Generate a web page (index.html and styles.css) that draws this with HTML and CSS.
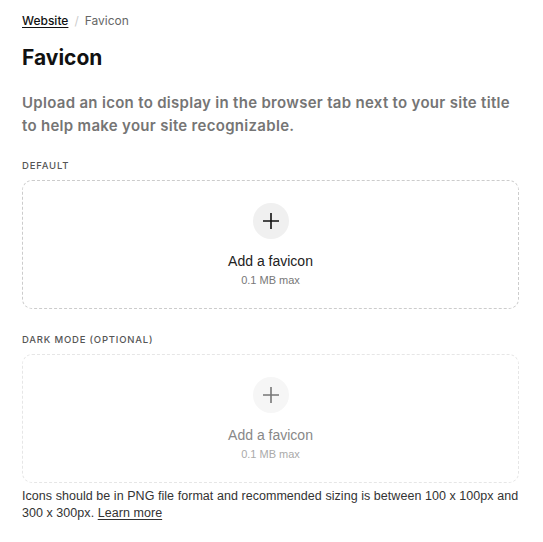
FILE: index.html
```html
<!DOCTYPE html>
<html lang="en">
<head>
    <meta charset="UTF-8">
    <meta name="viewport" content="width=device-width, initial-scale=1.0">
    <title>Favicon</title>
    <link rel="stylesheet" href="styles.css">
</head>
<body>
    <div class="panel">
        <div class="crumbs">
            <a href="#" class="crumb-link">Website</a>
            <span class="crumb-sep">/</span>
            <span class="crumb-current">Favicon</span>
        </div>

        <h1 class="title">Favicon</h1>

        <p class="lead">Upload an icon to display in the browser tab next to your site title to help make your site recognizable.</p>

        <!-- Default favicon -->
        <div class="field">
            <div class="label">Default</div>
            <div class="drop">
                <div class="plus">
                    <svg width="20" height="20" viewBox="0 0 20 20"><path d="M10 2v16M2 10h16" stroke="currentColor" stroke-width="1.6" fill="none"/></svg>
                </div>
                <div class="drop-title">Add a favicon</div>
                <div class="drop-sub">0.1 MB max</div>
            </div>
        </div>

        <!-- Dark mode favicon -->
        <div class="field">
            <div class="label">Dark mode (optional)</div>
            <div class="drop disabled">
                <div class="plus">
                    <svg width="20" height="20" viewBox="0 0 20 20"><path d="M10 2v16M2 10h16" stroke="currentColor" stroke-width="1.6" fill="none"/></svg>
                </div>
                <div class="drop-title">Add a favicon</div>
                <div class="drop-sub">0.1 MB max</div>
            </div>
        </div>

        <p class="note">Icons should be in PNG file format and recommended sizing is between 100 x 100px and 300 x 300px. <a href="#">Learn more</a></p>
    </div>
</body>
</html>
```

FILE: styles.css
```css
body {
    font-family: "Liberation Sans", Arial, sans-serif;
    margin: 0;
    background: #fff;
    color: #222;
}
.panel {
    padding: 11px 22px 0 22px;
    width: 497px;
}
.crumbs {
    font-family: Inter, sans-serif;
    font-size: 12px;
    display: flex;
    gap: 6px;
    align-items: center;
    height: 18px;
}
.crumb-link {
    color: #111;
    font-weight: 500;
    text-decoration: underline;
    text-underline-offset: 2px;
}
.crumb-sep {
    color: #ccc;
}
.crumb-current {
    color: #666;
}
.title {
    font-family: Inter, sans-serif;
    font-size: 21px;
    font-weight: 700;
    margin: 15px 0 0 0;
    line-height: 28px;
    color: #111;
}
.lead {
    font-family: Inter, sans-serif;
    font-size: 15px;
    font-weight: 600;
    letter-spacing: 0.3px;
    line-height: 23px;
    color: #757575;
    margin: 19px 0 0 0;
}
.field {
    margin-top: 23px;
}
.field + .field {
    margin-top: 25px;
}
.label {
    font-family: Inter, sans-serif;
    font-size: 9.5px;
    font-weight: 500;
    letter-spacing: 0.8px;
    text-transform: uppercase;
    color: #555;
    line-height: 12px;
    margin-bottom: 8px;
}
.drop {
    border: 1px dashed #ccc;
    border-radius: 10px;
    height: 127px;
    display: flex;
    flex-direction: column;
    align-items: center;
    justify-content: center;
}
.plus {
    width: 36px;
    height: 36px;
    border-radius: 50%;
    background: #f0f0f0;
    color: #111;
    display: flex;
    align-items: center;
    justify-content: center;
    margin-top: 1px;
}
.drop-title {
    font-size: 14px;
    line-height: 18px;
    margin-top: 13px;
    color: #222;
}
.drop-sub {
    font-size: 11px;
    line-height: 14px;
    margin-top: 3px;
    color: #777;
}
.drop.disabled {
    border-color: #e6e6e6;
}
.drop.disabled .plus {
    background: #f6f6f6;
    color: #777;
}
.drop.disabled .drop-title {
    color: #888;
}
.drop.disabled .drop-sub {
    color: #aaa;
}
.note {
    font-size: 12.5px;
    letter-spacing: 0.05px;
    line-height: 17px;
    color: #333;
    margin: 5px 0 0 0;
}
.note a {
    color: #333;
    text-underline-offset: 2px;
}
```
